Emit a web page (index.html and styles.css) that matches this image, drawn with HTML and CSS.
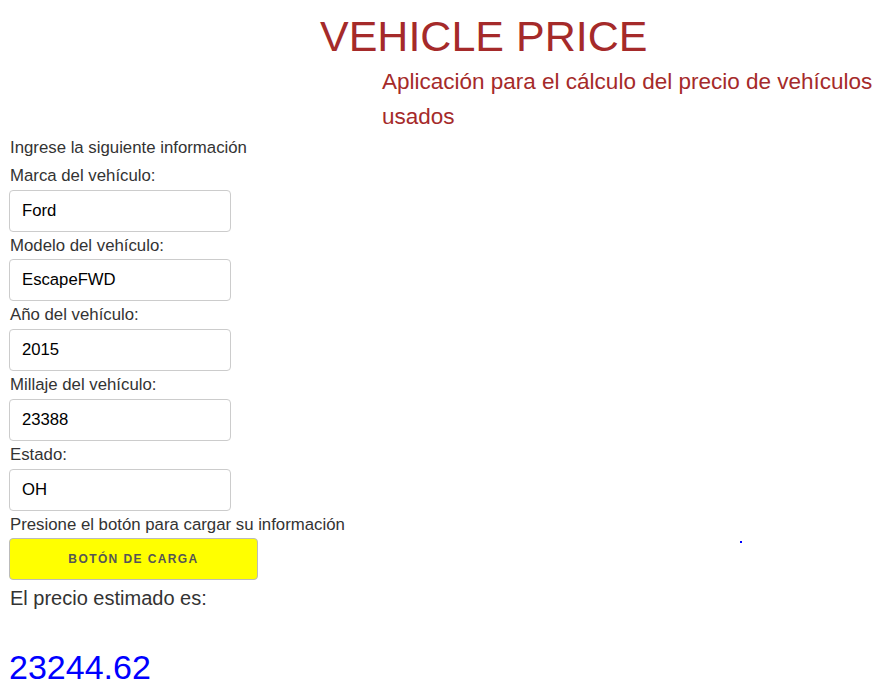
FILE: index.html
```html
<!DOCTYPE html>
<html lang="es">
<head>
<meta charset="utf-8">
<title>Vehicle Price</title>
<link rel="stylesheet" href="styles.css">
</head>
<body>
<header class="header">
  <h1 class="title">VEHICLE PRICE</h1>
  <p class="subtitle">Aplicación para el cálculo del precio de vehículos usados</p>
</header>
<main class="form">
  <div class="line">Ingrese la siguiente información</div>
  <label class="line" for="marca">Marca del vehículo:</label>
  <input class="field" id="marca" type="text" value="Ford">
  <label class="line" for="modelo">Modelo del vehículo:</label>
  <input class="field" id="modelo" type="text" value="EscapeFWD">
  <label class="line" for="anio">Año del vehículo:</label>
  <input class="field" id="anio" type="text" value="2015">
  <label class="line" for="millaje">Millaje del vehículo:</label>
  <input class="field" id="millaje" type="text" value="23388">
  <label class="line" for="estado">Estado:</label>
  <input class="field" id="estado" type="text" value="OH">
  <div class="line">Presione el botón para cargar su información</div>
  <div class="button-row">
    <button class="load-btn" type="button">Botón de carga</button>
    <span class="dot"></span>
  </div>
  <div class="result-label">El precio estimado es:</div>
  <div class="result-value">23244.62</div>
</main>
</body>
</html>
```
FILE: styles.css
```css
html, body {
  margin: 0;
  padding: 0;
  background: #ffffff;
}
body {
  font-family: "Liberation Sans", Arial, sans-serif;
  color: #333333;
}
.header {
  display: flex;
  flex-direction: column;
}
.title {
  margin: 8px 0 0 320px;
  font-weight: normal;
  font-size: 43px;
  line-height: 56px;
  color: #a52a2a;
}
.subtitle {
  margin: 0 0 0 382px;
  font-size: 22.5px;
  line-height: 35px;
  color: #a52a2a;
  max-width: 500px;
}
.form {
  display: flex;
  flex-direction: column;
  align-items: flex-start;
  padding: 0 0 0 9px;
}
.line {
  display: block;
  font-size: 16.8px;
  line-height: 27.75px;
  padding-left: 1px;
  color: #333333;
}
.field {
  box-sizing: border-box;
  width: 222px;
  height: 42px;
  margin: 0;
  padding: 0 12px;
  border: 1px solid #cccccc;
  border-radius: 4px;
  font-family: "Liberation Sans", Arial, sans-serif;
  font-size: 16.7px;
  color: #000000;
  background: #ffffff;
}
.button-row {
  display: flex;
  align-items: flex-start;
  align-self: stretch;
}
.load-btn {
  box-sizing: border-box;
  width: 249px;
  height: 42px;
  margin: 0;
  background: #ffff00;
  border: 1px solid #bbbbbb;
  border-radius: 4px;
  font-family: "Liberation Sans", Arial, sans-serif;
  font-size: 12px;
  font-weight: bold;
  letter-spacing: 1.4px;
  text-transform: uppercase;
  color: #555555;
}
.dot {
  width: 2px;
  height: 2px;
  background: #0000ff;
  margin-left: 482px;
  margin-top: 3px;
}
.result-label {
  font-size: 20px;
  line-height: 36px;
  padding-left: 1px;
  color: #333333;
}
.result-value {
  margin-top: 30px;
  font-size: 34px;
  line-height: 42px;
  color: #0000ff;
}
```
